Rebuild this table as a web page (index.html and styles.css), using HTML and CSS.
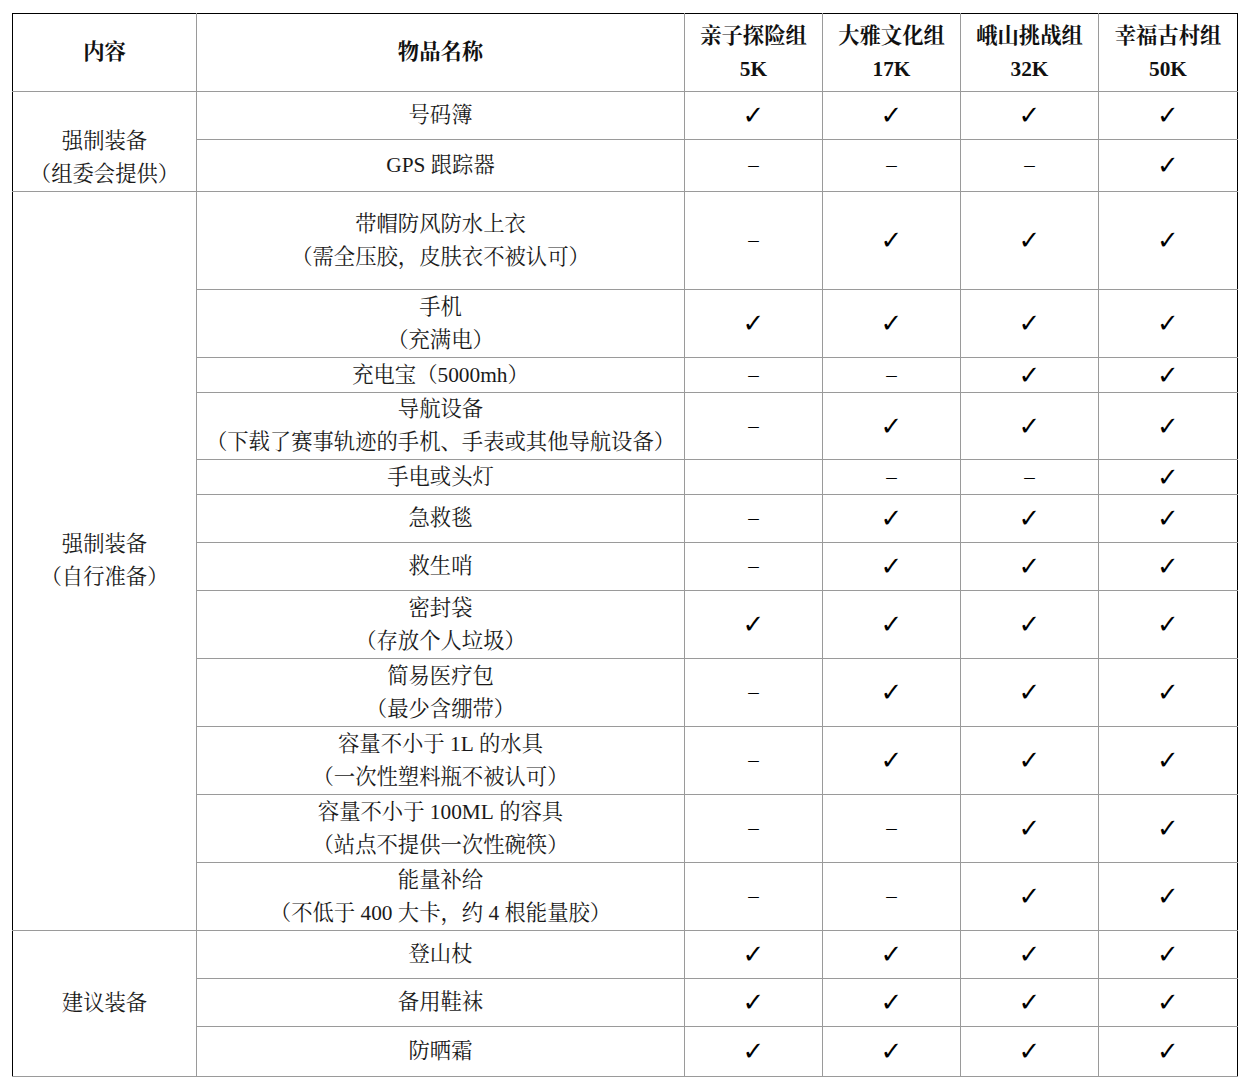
FILE: index.html
```html
<!DOCTYPE html>
<html lang="zh-CN">
<head>
<meta charset="utf-8">
<title>装备清单</title>
<link rel="stylesheet" href="styles.css">
</head>
<body>
<table class="gear">
  <colgroup>
    <col class="c-cat">
    <col class="c-item">
    <col class="c-grp">
    <col class="c-grp">
    <col class="c-grp">
    <col class="c-grp-last">
  </colgroup>
  <thead>
    <tr class="h78">
      <th>内容</th>
      <th>物品名称</th>
      <th class="grp">亲子探险组<br><span class="num">5K</span></th>
      <th class="grp">大雅文化组<br><span class="num">17K</span></th>
      <th class="grp">峨山挑战组<br><span class="num">32K</span></th>
      <th class="grp">幸福古村组<br><span class="num">50K</span></th>
    </tr>
  </thead>
  <tbody>
    <tr class="h48">
      <td rowspan="2" class="bottom">强制装备<br>（组委会提供）</td>
      <td>号码簿</td>
      <td class="ck">✓</td><td class="ck">✓</td><td class="ck">✓</td><td class="ck">✓</td>
    </tr>
    <tr class="h52">
      <td><span class="lat">GPS</span> 跟踪器</td>
      <td class="ds">–</td><td class="ds">–</td><td class="ds">–</td><td class="ck">✓</td>
    </tr>
    <tr class="h98">
      <td rowspan="12">强制装备<br>（自行准备）</td>
      <td>带帽防风防水上衣<br>（需全压胶，皮肤衣不被认可）</td>
      <td class="ds">–</td><td class="ck">✓</td><td class="ck">✓</td><td class="ck">✓</td>
    </tr>
    <tr class="h68">
      <td>手机<br>（充满电）</td>
      <td class="ck">✓</td><td class="ck">✓</td><td class="ck">✓</td><td class="ck">✓</td>
    </tr>
    <tr class="h35">
      <td>充电宝（<span class="lat">5000mh</span>）</td>
      <td class="ds">–</td><td class="ds">–</td><td class="ck">✓</td><td class="ck">✓</td>
    </tr>
    <tr class="h67">
      <td>导航设备<br>（下载了赛事轨迹的手机、手表或其他导航设备）</td>
      <td class="ds">–</td><td class="ck">✓</td><td class="ck">✓</td><td class="ck">✓</td>
    </tr>
    <tr class="h35">
      <td>手电或头灯</td>
      <td></td><td class="ds">–</td><td class="ds">–</td><td class="ck">✓</td>
    </tr>
    <tr class="h48">
      <td>急救毯</td>
      <td class="ds">–</td><td class="ck">✓</td><td class="ck">✓</td><td class="ck">✓</td>
    </tr>
    <tr class="h48">
      <td>救生哨</td>
      <td class="ds">–</td><td class="ck">✓</td><td class="ck">✓</td><td class="ck">✓</td>
    </tr>
    <tr class="h68">
      <td>密封袋<br>（存放个人垃圾）</td>
      <td class="ck">✓</td><td class="ck">✓</td><td class="ck">✓</td><td class="ck">✓</td>
    </tr>
    <tr class="h68">
      <td>简易医疗包<br>（最少含绷带）</td>
      <td class="ds">–</td><td class="ck">✓</td><td class="ck">✓</td><td class="ck">✓</td>
    </tr>
    <tr class="h68">
      <td>容量不小于 <span class="lat">1L</span> 的水具<br>（一次性塑料瓶不被认可）</td>
      <td class="ds">–</td><td class="ck">✓</td><td class="ck">✓</td><td class="ck">✓</td>
    </tr>
    <tr class="h68">
      <td>容量不小于 <span class="lat">100ML</span> 的容具<br>（站点不提供一次性碗筷）</td>
      <td class="ds">–</td><td class="ds">–</td><td class="ck">✓</td><td class="ck">✓</td>
    </tr>
    <tr class="h68">
      <td>能量补给<br>（不低于 <span class="lat">400</span> 大卡，约 <span class="lat">4</span> 根能量胶）</td>
      <td class="ds">–</td><td class="ds">–</td><td class="ck">✓</td><td class="ck">✓</td>
    </tr>
    <tr class="h48">
      <td rowspan="3">建议装备</td>
      <td>登山杖</td>
      <td class="ck">✓</td><td class="ck">✓</td><td class="ck">✓</td><td class="ck">✓</td>
    </tr>
    <tr class="h48">
      <td>备用鞋袜</td>
      <td class="ck">✓</td><td class="ck">✓</td><td class="ck">✓</td><td class="ck">✓</td>
    </tr>
    <tr class="h50">
      <td>防晒霜</td>
      <td class="ck">✓</td><td class="ck">✓</td><td class="ck">✓</td><td class="ck">✓</td>
    </tr>
  </tbody>
</table>
</body>
</html>
```

FILE: styles.css
```css
html, body {
  margin: 0;
  padding: 0;
  background: #ffffff;
}

body {
  padding: 13px 0 0 12px;
  font-family: "Liberation Serif", "Noto Serif CJK SC", "Noto Sans CJK SC", serif;
  color: #1a1a1a;
}

.gear {
  border-collapse: collapse;
  table-layout: fixed;
  width: 1226px;
  font-size: 21.33px;
  line-height: 33px;
  border-top: 1px solid #000;
  border-left: 1px solid #000;
  border-right: 1px solid #000;
}

.c-cat { width: 184px; }
.c-item { width: 488px; }
.c-grp { width: 138px; }
.c-grp-last { width: 139px; }

.gear th,
.gear td {
  border: 1px solid #9a9a9a;
  padding: 0;
  text-align: center;
  vertical-align: middle;
  font-weight: 400;
  white-space: nowrap;
}

.gear th {
  font-weight: 700;
  color: #111;
}

.gear tr > :first-child { border-left: 1px solid #000; }
.gear tr > :last-child { border-right: 1px solid #000; }
.gear thead th { border-top: 1px solid #000; }

.gear td.bottom {
  vertical-align: bottom;
}

.num {
  font-weight: 700;
}

.lat {
  font-family: "Liberation Serif", serif;
}

.gear td.ck {
  font-family: "DejaVu Sans", sans-serif;
  font-weight: 700;
  font-size: 26px;
  color: #000;
}

.gear td.ds {
  font-family: "Liberation Serif", serif;
  font-size: 21px;
  color: #000;
}

.h35 { height: 35px; }
.h48 { height: 48px; }
.h50 { height: 50px; }
.h52 { height: 52px; }
.h67 { height: 67px; }
.h68 { height: 68px; }
.h78 { height: 78px; }
.h98 { height: 98px; }
```
